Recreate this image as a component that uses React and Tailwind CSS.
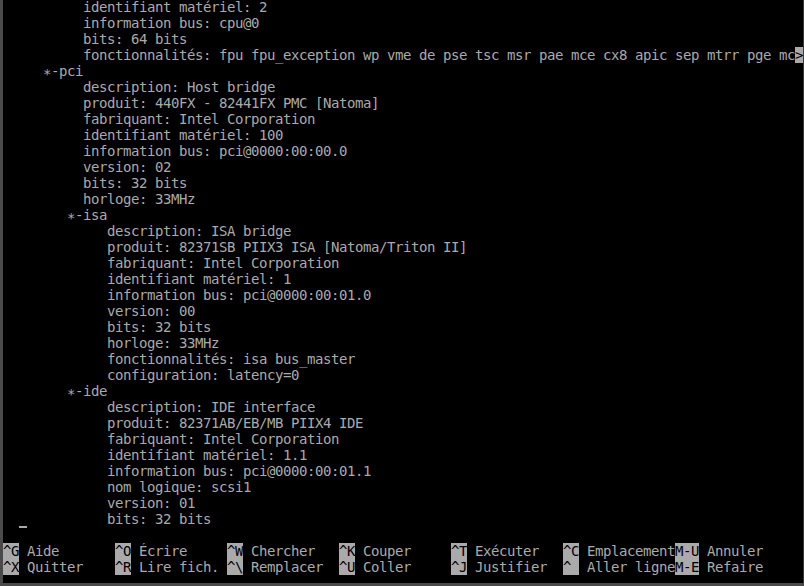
import React from "react";

const lines = [
  "          identifiant matériel: 2",
  "          information bus: cpu@0",
  "          bits: 64 bits",
  "          fonctionnalités: fpu fpu_exception wp vme de pse tsc msr pae mce cx8 apic sep mtrr pge mc",
  "     *-pci",
  "          description: Host bridge",
  "          produit: 440FX - 82441FX PMC [Natoma]",
  "          fabriquant: Intel Corporation",
  "          identifiant matériel: 100",
  "          information bus: pci@0000:00:00.0",
  "          version: 02",
  "          bits: 32 bits",
  "          horloge: 33MHz",
  "        *-isa",
  "             description: ISA bridge",
  "             produit: 82371SB PIIX3 ISA [Natoma/Triton II]",
  "             fabriquant: Intel Corporation",
  "             identifiant matériel: 1",
  "             information bus: pci@0000:00:01.0",
  "             version: 00",
  "             bits: 32 bits",
  "             horloge: 33MHz",
  "             fonctionnalités: isa bus_master",
  "             configuration: latency=0",
  "        *-ide",
  "             description: IDE interface",
  "             produit: 82371AB/EB/MB PIIX4 IDE",
  "             fabriquant: Intel Corporation",
  "             identifiant matériel: 1.1",
  "             information bus: pci@0000:00:01.1",
  "             nom logique: scsi1",
  "             version: 01",
  "             bits: 32 bits",
  "",
];

const menu1 = [
  ["^G", "Aide"],
  ["^O", "Écrire"],
  ["^W", "Chercher"],
  ["^K", "Couper"],
  ["^T", "Exécuter"],
  ["^C", "Emplacement"],
  ["M-U", "Annuler"],
];
const menu2 = [
  ["^X", "Quitter"],
  ["^R", "Lire fich."],
  ["^\\", "Remplacer"],
  ["^U", "Coller"],
  ["^J", "Justifier"],
  ["^_", "Aller ligne"],
  ["M-E", "Refaire"],
];

function MenuRow({ items }) {
  return (
    <div className="flex h-[16px] leading-[16px] whitespace-pre">
      {items.map(([k, l], i) => (
        <div key={i} className={i < 6 ? "w-[112px] flex-none" : "flex-none"}>
          <span className="bg-[#aaaaaa] text-black">{k}</span>
          <span>{" " + l}</span>
        </div>
      ))}
    </div>
  );
}

function Line({ text, i }) {
  const star = text.indexOf("*-");
  if (star >= 0) {
    return (
      <div className="h-[16px] leading-[16px] whitespace-pre">
        {text.slice(0, star)}
        <span className="relative top-[3px]">*</span>
        {text.slice(star + 1)}
      </div>
    );
  }
  return (
    <div className="h-[16px] leading-[16px] whitespace-pre">
      {text}
      {i === 3 ? <span className="bg-[#aaaaaa] text-black">&gt;</span> : null}
    </div>
  );
}

export default function App() {
  return (
    <div className="w-[804px] h-[586px] bg-black border-l-[3px] border-r-[1px] border-b-[3px] border-l-[#4a4a4a] border-r-[#3a3a3a] border-b-[#4a4a4a] overflow-hidden">
      <div
        className="relative w-[800px] mt-[-1px] text-[#aaaaaa] text-[14px] tracking-[-0.4287px]"
        style={{ fontFamily: '"DejaVu Sans Mono", "Liberation Mono", monospace' }}
      >
        {lines.map((t, i) => (
          <Line key={i} text={t} i={i} />
        ))}
        <div className="absolute left-[16px] top-[527px] w-[8px] h-[2px] bg-[#aaaaaa]" />
        <MenuRow items={menu1} />
        <MenuRow items={menu2} />
      </div>
    </div>
  );
}
